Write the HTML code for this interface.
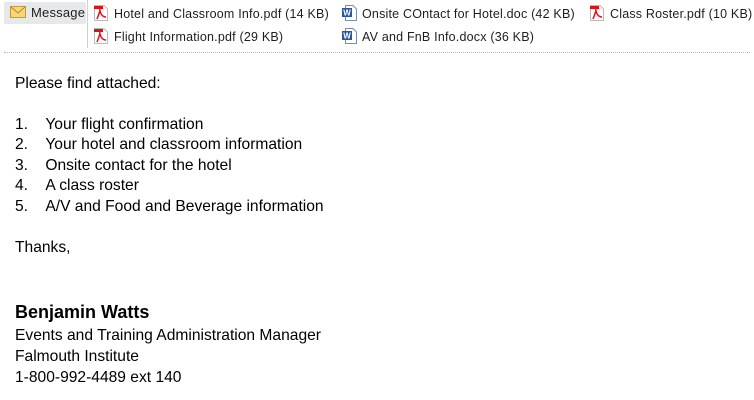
<!DOCTYPE html>
<html><head><style>
body{margin:0;width:754px;height:400px;background:#fff;font-family:"Liberation Sans",sans-serif;position:relative;overflow:hidden;color:#000}
.a{position:absolute;font-size:12.5px;color:#1e1e1e;white-space:nowrap;letter-spacing:0.2px}
.t{position:absolute;left:15px;font-size:15.6px;white-space:nowrap}
.pdf{display:inline-block;width:14px;height:16px;vertical-align:-3px;margin-right:6px}
.doc{display:inline-block;width:15px;height:16px;vertical-align:-3px;margin-right:5px}
</style></head><body>
<div style="position:absolute;left:4px;top:2px;width:82px;height:22px;background:#e6e8ea;border-radius:2px"></div>
<svg style="position:absolute;left:10px;top:6px" width="16" height="13"><rect x="0.5" y="0.5" width="15" height="11" fill="#f6d77a" stroke="#c79a2e"/><path d="M1 1 L8 7 L15 1" fill="none" stroke="#b8862a"/></svg>
<div class="a" style="left:31px;top:5px;font-size:13px">Message</div>
<div style="position:absolute;left:87px;top:0;width:1px;height:48px;background:#d0d0d0"></div>
<svg width="0" height="0" style="position:absolute"><defs>
<symbol id="p" viewBox="0 0 14 16"><path d="M0.5 0.5H10L13.5 4V15.5H0.5Z" fill="#fff" stroke="#bbb"/><rect x="0" y="1" width="9" height="3" fill="#d8141b"/><path d="M3 14 C5 9 6 6 6 4 M6 6 C7 10 9 12 12 12" fill="none" stroke="#d8141b" stroke-width="1.5"/></symbol>
<symbol id="w" viewBox="0 0 15 16"><path d="M3.5 0.5H11L14.5 4V15.5H3.5Z" fill="#fff" stroke="#7a8fb0"/><rect x="0" y="3" width="10" height="9" fill="#2b5797"/><text x="1.2" y="10.5" font-size="8" font-weight="bold" fill="#fff" font-family="Liberation Sans">W</text></symbol>
</defs></svg>
<div class="a" style="left:94px;top:5px"><svg class="pdf"><use href="#p"/></svg>Hotel and Classroom Info.pdf (14 KB)</div>
<div class="a" style="left:94px;top:28px"><svg class="pdf"><use href="#p"/></svg>Flight Information.pdf (29 KB)</div>
<div class="a" style="left:342px;top:5px"><svg class="doc"><use href="#w"/></svg>Onsite COntact for Hotel.doc (42 KB)</div>
<div class="a" style="left:342px;top:28px"><svg class="doc"><use href="#w"/></svg>AV and FnB Info.docx (36 KB)</div>
<div class="a" style="left:590px;top:5px"><svg class="pdf"><use href="#p"/></svg>Class Roster.pdf (10 KB)</div>
<div style="position:absolute;left:4px;right:4px;top:52px;border-top:1px dotted #b8b8b8"></div>
<div class="t" style="top:75px">Please find attached:</div>
<div class="t" style="top:116px">1.&nbsp;&nbsp;&nbsp;&nbsp;Your flight confirmation</div>
<div class="t" style="top:136px">2.&nbsp;&nbsp;&nbsp;&nbsp;Your hotel and classroom information</div>
<div class="t" style="top:157px">3.&nbsp;&nbsp;&nbsp;&nbsp;Onsite contact for the hotel</div>
<div class="t" style="top:177px">4.&nbsp;&nbsp;&nbsp;&nbsp;A class roster</div>
<div class="t" style="top:198px">5.&nbsp;&nbsp;&nbsp;&nbsp;A/V and Food and Beverage information</div>
<div class="t" style="top:239px">Thanks,</div>
<div class="t" style="top:302px;font-size:18px;font-weight:bold">Benjamin Watts</div>
<div class="t" style="top:327px">Events and Training Administration Manager</div>
<div class="t" style="top:348px">Falmouth Institute</div>
<div class="t" style="top:369px">1-800-992-4489 ext 140</div>
</body></html>
